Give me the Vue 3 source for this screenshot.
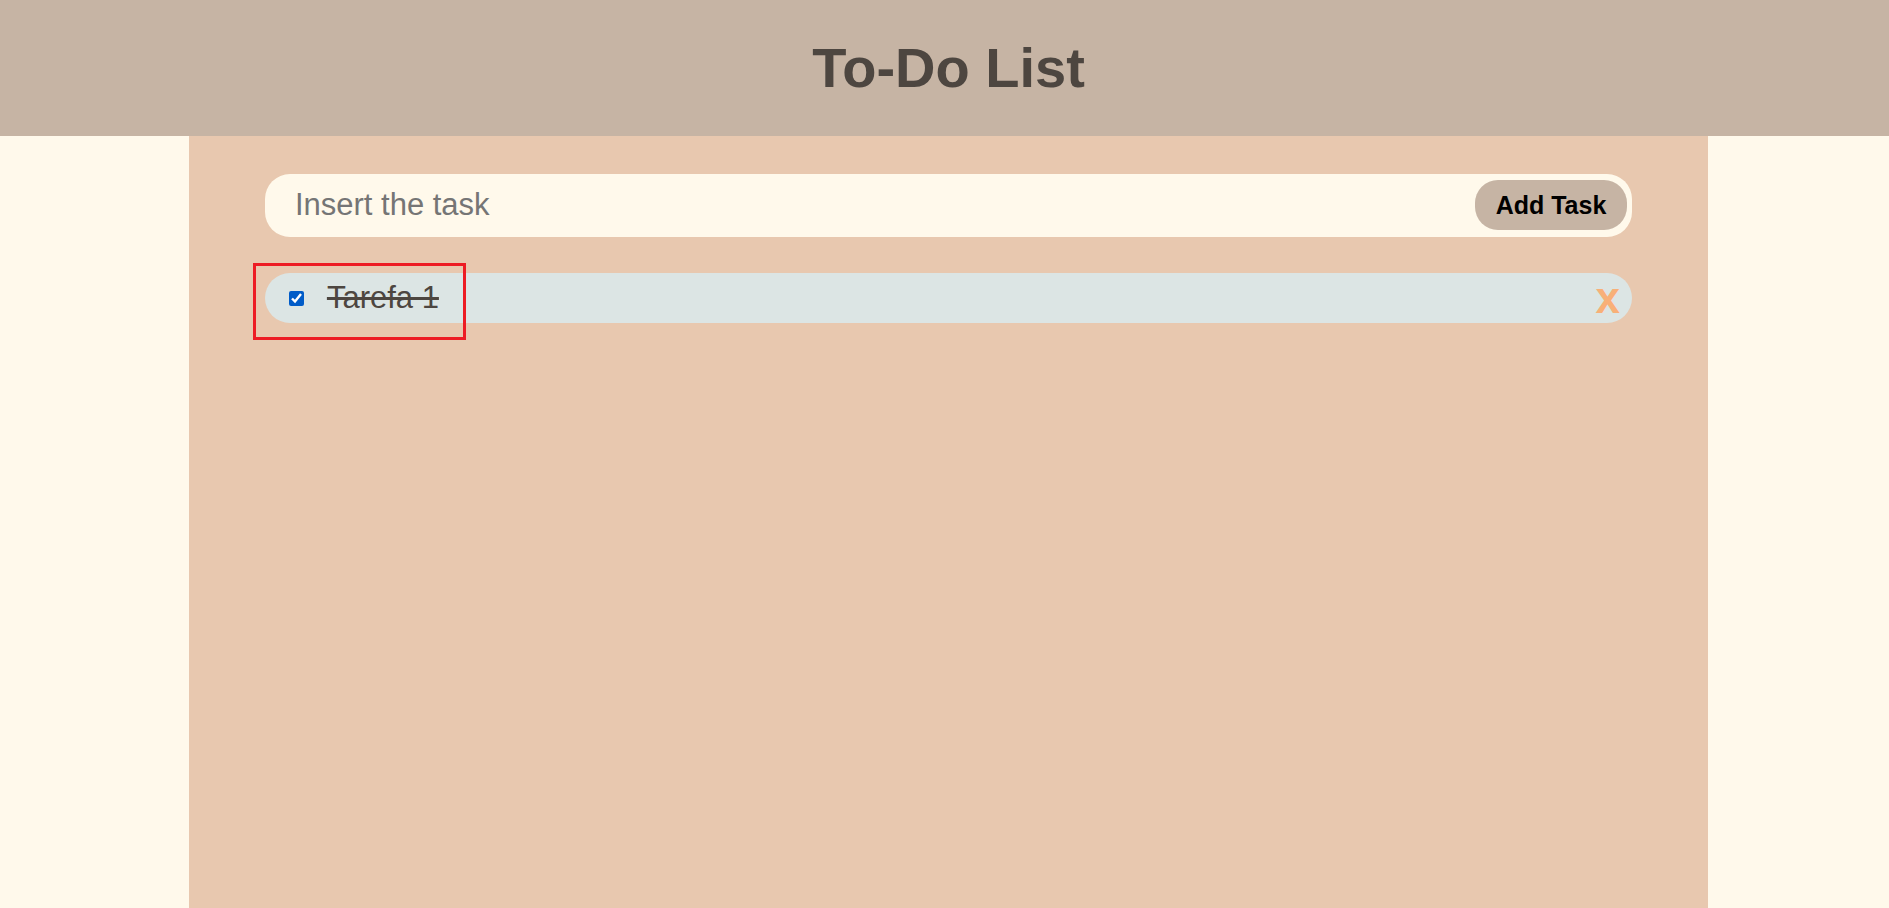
<script setup>
import { ref } from 'vue'

const draft = ref('')
const tasks = ref([{ id: 1, name: 'Tarefa 1', done: true, marked: true }])
let nextId = 2

function addTask() {
  const name = draft.value.trim()
  if (!name) return
  tasks.value.push({ id: nextId++, name, done: false, marked: false })
  draft.value = ''
}

function removeTask(id) {
  tasks.value = tasks.value.filter((task) => task.id !== id)
}
</script>

<template>
  <div class="page">
    <header class="header">
      <h1 class="title">To-Do List</h1>
    </header>
    <main class="board">
      <form class="entry" @submit.prevent="addTask">
        <input v-model="draft" class="entry-input" type="text" placeholder="Insert the task" aria-label="Insert the task" />
        <button class="entry-button" type="submit">Add Task</button>
      </form>
      <ul class="tasks">
        <li v-for="task in tasks" :key="task.id" class="task">
          <input :id="`task-${task.id}`" v-model="task.done" class="check" type="checkbox" />
          <label :for="`task-${task.id}`" class="name" :class="{ done: task.done }">{{ task.name }}</label>
          <button class="remove" type="button" aria-label="Remove task" @click="removeTask(task.id)">x</button>
          <span v-if="task.marked" class="marker"></span>
        </li>
      </ul>
    </main>
  </div>
</template>

<style>
body {
  background: #fff9eb;
}
</style>

<style scoped>
.page {
  display: flex;
  flex-direction: column;
  min-height: 100vh;
  font-family: "Liberation Sans", Arial, sans-serif;
  color: #4d4640;
}
.header {
  padding: 36px 0 36px 8px;
  background: #c6b4a4;
  text-align: center;
}
.title {
  margin: 0;
  font-size: 56px;
  line-height: 64px;
}
.board {
  flex: 1;
  margin: 0 181px 0 10%;
  padding: 38px 76px;
  background: #e8c8af;
}
.entry {
  display: flex;
  align-items: center;
  padding: 6px 5px 7px 30px;
  border-radius: 25px;
  background: #fff9eb;
}
.entry-input {
  flex: 1;
  min-width: 0;
  height: 50px;
  padding: 0;
  border: 0;
  outline: 0;
  background: transparent;
  color: #4d4640;
  font: 31px "Liberation Sans", Arial, sans-serif;
}
.entry-input::placeholder {
  color: #757575;
}
.entry-button {
  width: 152px;
  height: 50px;
  padding: 0;
  border: 0;
  border-radius: 23px;
  background: #c6b4a4;
  color: #000;
  font: bold 25px "Liberation Sans", Arial, sans-serif;
  cursor: pointer;
}
.tasks {
  margin: 36px 0 0;
  padding: 0;
  list-style: none;
}
.task {
  position: relative;
  display: flex;
  align-items: center;
  height: 50px;
  margin-bottom: 20px;
  padding: 0 12px 0 24px;
  border-radius: 25px;
  background: #dce5e4;
}
.check {
  width: 15px;
  height: 15px;
  margin: 0 23px 0 0;
  accent-color: #005cc8;
}
.name {
  flex: 1;
  font-size: 31px;
  line-height: 50px;
}
.done {
  text-decoration: line-through;
}
.remove {
  padding: 0;
  border: 0;
  background: transparent;
  color: #f8b078;
  font: bold 44px/50px "Liberation Sans", Arial, sans-serif;
  cursor: pointer;
}
.marker {
  position: absolute;
  top: -10px;
  left: -12px;
  box-sizing: border-box;
  width: 213px;
  height: 77px;
  border: 3px solid #ed1c24;
  pointer-events: none;
}
</style>
